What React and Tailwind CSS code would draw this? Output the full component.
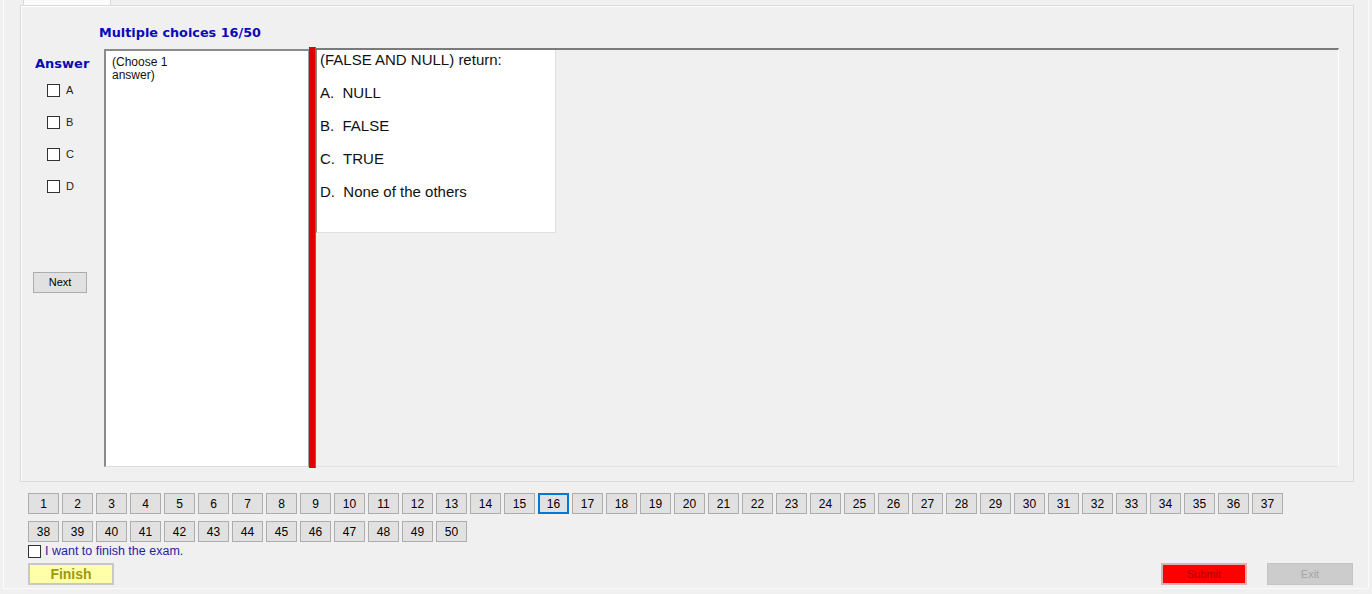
import React, { useState } from 'react';

const options = ['A', 'B', 'C', 'D'];
const questionLines = ['A.  NULL', 'B.  FALSE', 'C.  TRUE', 'D.  None of the others'];

function NavButton({ n, current, onClick }) {
  const active = n === current;
  return (
    <button
      onClick={() => onClick(n)}
      className={`w-[31px] h-[21px] flex items-center justify-center text-[12px] text-black bg-[#e1e1e1] ${
        active ? 'border-2 border-[#0078d7]' : 'border border-[#adadad]'
      }`}
    >
      {n}
    </button>
  );
}

export default function App() {
  const [checked, setChecked] = useState({});
  const [current, setCurrent] = useState(16);
  const [finish, setFinish] = useState(false);

  const nums = Array.from({ length: 50 }, (_, i) => i + 1);

  return (
    <div className="w-[1372px] h-[594px] bg-[#f0f0f0] overflow-hidden font-['Liberation_Sans',Arial,sans-serif]">
      <div className="ml-[3px] w-[1366px] h-[589px] border-l border-r border-b border-[#fbfbfb] flex flex-col">
        {/* tab header */}
        <div className="h-[5px] flex">
          <div className="ml-[19px] w-[88px] h-[5px] bg-[#fbfbfb] border-l border-r border-[#d9d9d9]" />
        </div>

        {/* tab page */}
        <div className="ml-[16px] w-[1334px] h-[477px] border border-[#d9d9d9] bg-[#f0f0f0] flex flex-col">
          <div className="border-l border-t border-white h-full flex flex-col">
            <div className="pl-[77px] pt-[18px] h-[40px] font-['DejaVu_Sans',sans-serif] font-bold text-[12.8px] leading-[16px] text-[#0a0ab8]">
              Multiple choices {current}/50
            </div>

            <div className="flex items-start h-[421px]">
              {/* answer column */}
              <div className="w-[82px] flex flex-col">
                <div className="pl-[13px] pt-[9px] font-['DejaVu_Sans',sans-serif] font-bold text-[13px] leading-[16px] text-[#0a0ab8]">
                  Answer
                </div>
                <div className="pl-[25px] pt-[12px] flex flex-col gap-[19px]">
                  {options.map((o) => (
                    <label key={o} className="flex items-center h-[13px] cursor-pointer">
                      <span
                        onClick={() => setChecked({ ...checked, [o]: !checked[o] })}
                        className="w-[13px] h-[13px] border border-[#333333] bg-white flex items-center justify-center text-[10px] leading-none"
                      >
                        {checked[o] ? '✓' : ''}
                      </span>
                      <span className="ml-[6px] text-[11px] text-[#222]">{o}</span>
                    </label>
                  ))}
                </div>
                <button className="ml-[11px] mt-[79px] w-[54px] h-[21px] bg-[#e1e1e1] border border-[#adadad] text-[11px] text-black">
                  Next
                </button>
              </div>

              {/* answer box */}
              <div className="mt-[2px] w-[205px] h-[418px] bg-white border-l-2 border-t-2 border-r border-b border-l-[#8a8a8a] border-t-[#8a8a8a] border-r-[#a0a0a0] border-b-[#dcdcdc] pl-[6px] pt-[5px] text-[12px] leading-[13px] text-[#111]">
                (Choose 1
                <br />
                answer)
              </div>

              {/* red divider */}
              <div className="w-[7px] h-[421px] bg-[#e10000] border-r border-[#6e6e6e]" />

              {/* question panel */}
              <div className="mt-[1px] w-[1023px] h-[419px] bg-[#f0f0f0] border-t-2 border-t-[#7a7a7a] border-r border-r-white border-b border-b-[#e3e3e3]">
                <div className="w-[240px] h-[183px] bg-white border-l border-l-[#8a8a8a] border-r border-b border-r-[#e0e0e0] border-b-[#e0e0e0] pl-[3px] pt-[1px] text-[15px] text-[#111]">
                  <div className="leading-[18px]">(FALSE AND NULL) return:</div>
                  <div className="flex flex-col">
                    {questionLines.map((l) => (
                      <div key={l} className="mt-[15px] leading-[18px] whitespace-pre">
                        {l}
                      </div>
                    ))}
                  </div>
                </div>
              </div>
            </div>
          </div>
        </div>

        {/* navigation */}
        <div className="ml-[24px] mt-[11px] flex flex-col gap-[7px]">
          <div className="flex gap-[3px]">
            {nums.slice(0, 37).map((n) => (
              <NavButton key={n} n={n} current={current} onClick={setCurrent} />
            ))}
          </div>
          <div className="flex gap-[3px]">
            {nums.slice(37).map((n) => (
              <NavButton key={n} n={n} current={current} onClick={setCurrent} />
            ))}
          </div>
        </div>

        <label className="ml-[24px] mt-[2px] h-[14px] flex items-center cursor-pointer" onClick={() => setFinish(!finish)}>
          <span className="w-[13px] h-[13px] border border-[#333333] bg-white flex items-center justify-center text-[10px] leading-none">
            {finish ? '✓' : ''}
          </span>
          <span className="ml-[4px] text-[12.5px] text-[#1f1fa3]">I want to finish the exam.</span>
        </label>

        <div className="mt-[5px] flex items-center">
          <button className="ml-[24px] w-[86px] h-[22px] bg-[#ffffa8] border-2 border-[#c8c8c8] font-bold text-[14px] leading-none text-[#9a9a12]">
            Finish
          </button>
          <button className="ml-auto w-[86px] h-[22px] bg-[#ff0000] border-2 border-[#dcb0b0] text-[11px] text-[#b00000]">
            Submit
          </button>
          <button className="ml-[20px] mr-[15px] w-[86px] h-[22px] bg-[#cccccc] border border-[#c4c4c4] text-[11px] text-[#a5a5a5]">
            Exit
          </button>
        </div>
      </div>
    </div>
  );
}
